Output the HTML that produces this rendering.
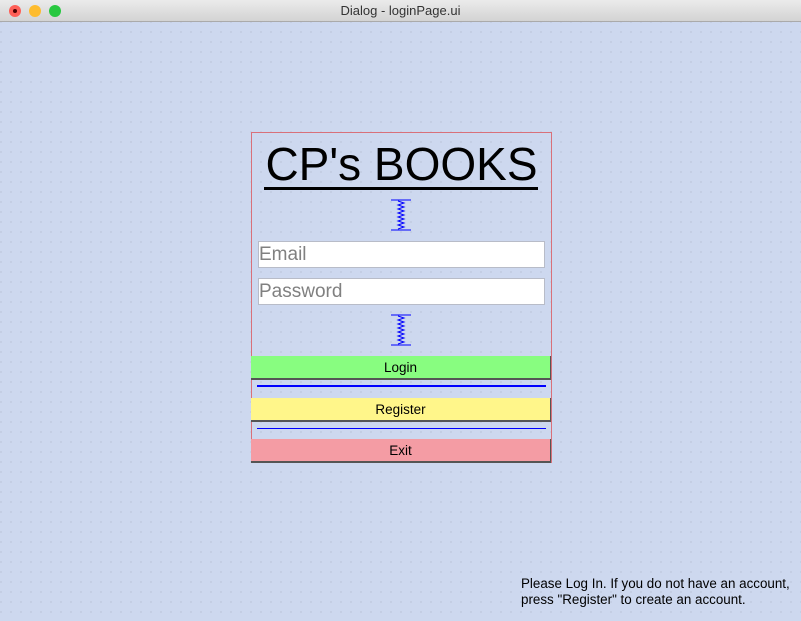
<!DOCTYPE html>
<html><head><meta charset="utf-8"><style>
body{margin:0;width:801px;height:621px;overflow:hidden;font-family:"Liberation Sans",sans-serif;position:relative;background:#cdd8ef}
.tb{position:absolute;left:0;top:0;width:801px;height:21px;background:linear-gradient(#ebebeb,#d3d3d3);border-bottom:1px solid #aaa;text-align:center;font-size:13px;line-height:22px;color:#333}
.c{position:absolute;top:5px;width:12px;height:12px;border-radius:50%}
.main{position:absolute;left:0;top:22px;width:801px;height:599px;background-color:#cdd8ef;background-image:radial-gradient(circle,#aab3c6 0.5px,transparent 0.8px);background-size:10px 10px;background-position:6px 5px}
.a{position:absolute}
.inp{position:absolute;left:258px;width:285px;height:25px;background:#fff;border:1px solid #b8bcc8;font-size:19px;color:#808080;line-height:25px;padding-left:0px;box-sizing:content-box}
.btn{position:absolute;left:251px;width:299px;height:22px;border-right:1px solid #555;border-bottom:2px solid #555;text-align:center;font-size:13.5px;line-height:24px;color:#000}
</style></head><body>
<div class="tb">Dialog - loginPage.ui
<div class="c" style="left:9px;background:#fe5f57;border:0"><div style="width:4px;height:4px;background:#4a0000;border-radius:50%;margin:4px"></div></div>
<div class="c" style="left:29px;background:#febc2e"></div>
<div class="c" style="left:49px;background:#28c840"></div>
</div>
<div class="main"></div>
<div class="a" style="left:251px;top:132px;width:299px;height:330px;border:1px solid #d9707a;border-bottom:none"></div>
<div class="a" style="left:251px;top:137px;width:301px;text-align:center;font-size:46px;line-height:54px;color:#000">CP's BOOKS</div>
<div class="a" style="left:264px;top:187px;width:274px;height:3px;background:#000"></div>
<svg class="a" style="left:390px;top:199px" width="22" height="33"><line x1="1" y1="1" x2="21" y2="1" stroke="#00f"/><line x1="1" y1="31" x2="21" y2="31" stroke="#00f"/><path d="M8 2 L14 4 L8 6 L14 8 L8 10 L14 12 L8 14 L14 16 L8 18 L14 20 L8 22 L14 24 L8 26 L14 28 L8 30" stroke="#00f" fill="none" stroke-width="1"/></svg>
<div class="inp" style="top:241px">Email</div>
<div class="inp" style="top:278px">Password</div>
<svg class="a" style="left:390px;top:314px" width="22" height="33"><line x1="1" y1="1" x2="21" y2="1" stroke="#00f"/><line x1="1" y1="31" x2="21" y2="31" stroke="#00f"/><path d="M8 2 L14 4 L8 6 L14 8 L8 10 L14 12 L8 14 L14 16 L8 18 L14 20 L8 22 L14 24 L8 26 L14 28 L8 30" stroke="#00f" fill="none" stroke-width="1"/></svg>
<div class="btn" style="top:356px;background:#88fd80">Login</div>
<div class="a" style="left:257px;top:385px;width:289px;height:2px;background:#00f"></div>
<div class="btn" style="top:398px;background:#fff68a">Register</div>
<div class="a" style="left:257px;top:428px;width:289px;height:1px;background:#00f"></div>
<div class="btn" style="top:439px;background:#f49ca4">Exit</div>
<div class="a" style="left:521px;top:576px;font-size:13.4px;line-height:16px;color:#000;white-space:nowrap">Please Log In. If you do not have an account,<br>press "Register" to create an account.</div>
</body></html>
